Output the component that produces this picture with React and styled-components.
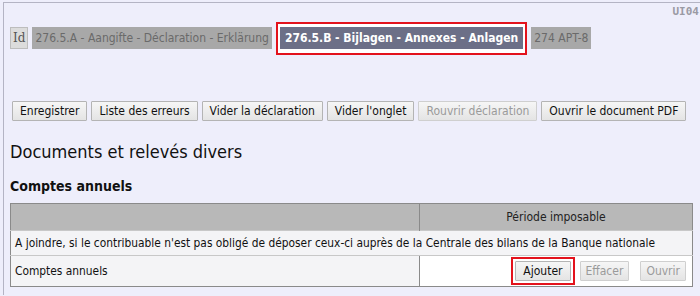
import React from "react";
import styled, { createGlobalStyle } from "styled-components";

const Global = createGlobalStyle`
  html, body { margin: 0; padding: 0; background: #eeeefb; }
  body { font-family: "DejaVu Sans Condensed", "DejaVu Sans", sans-serif; font-size: 12px; color: #111; }
`;

const Frame = styled.div`
  margin: 2px 0 0 3px;
  border-left: 1px solid #b4b4c4;
  border-top: 1px solid #b4b4c4;
  padding: 0 0 10px 6px;
  height: 293px;
  box-sizing: border-box;
  overflow: hidden;
`;

const TopBar = styled.div`
  display: flex;
  justify-content: flex-end;
  height: 14px;
  padding-top: 2px;
`;

const Code = styled.span`
  font-family: "DejaVu Sans Mono", monospace;
  font-weight: bold;
  font-size: 11px;
  line-height: 14px;
  color: #9a9aa4;
  margin-right: 1px;
`;

const TabRow = styled.div`
  display: flex;
  align-items: center;
  gap: 4px;
  margin-top: 2px;
  height: 34px;
`;

const IdBox = styled.div`
  height: 20px;
  line-height: 20px;
  padding: 0 2px;
  background: #dcdcdc;
  border: 1px solid #bdbdbd;
  color: #555;
  font-family: "DejaVu Serif", serif;
  font-size: 12px;
`;

const Tab = styled.div`
  height: 22px;
  line-height: 22px;
  padding: 0 3px;
  background: #a8a8a8;
  color: #6a6a6a;
  white-space: nowrap;
`;

const ActiveWrap = styled.div`
  border: 2px solid #e3121c;
  padding: 3px 2px 4px;
  background: #fff;
`;

const ActiveTab = styled.div`
  height: 22px;
  line-height: 22px;
  padding: 0 5px;
  background: #6c6f87;
  color: #fff;
  font-weight: bold;
  white-space: nowrap;
`;

const Toolbar = styled.div`
  display: flex;
  gap: 4px;
  margin-top: 46px;
  padding-left: 2px;
`;

const Button = styled.button`
  height: 20px;
  padding: 0 ${p => p.$pad ?? 7}px;
  margin-left: ${p => p.$gapBefore || 0}px;
  font-family: inherit;
  font-size: 12px;
  color: ${p => (p.disabled ? "#9a9a9a" : "#111")};
  background: linear-gradient(#f6f6f6, #e4e4e4);
  border: 1px solid ${p => (p.disabled ? "#cfcfcf" : "#b4b4b4")};
  border-radius: 1px;
  white-space: nowrap;
  cursor: default;
`;

const Heading = styled.h1`
  margin: 20px 0 0 0;
  font-size: 18px;
  font-weight: normal;
  color: #111;
  line-height: 22px;
`;

const SubHeading = styled.h2`
  margin: 14px 0 0 0;
  font-size: 14px;
  font-weight: bold;
  line-height: 18px;
`;

const Table = styled.table`
  margin-top: 8px;
  width: 683px;
  border-collapse: collapse;
  border: 1px solid #8a8a8a;
`;

const Th = styled.th`
  background: #b8b8b8;
  height: 26px;
  font-weight: normal;
  color: #222;
  text-align: center;
  border-left: 1px solid #8a8a8a;
  padding: 0;
  &:first-child { border-left: none; }
`;

const Td = styled.td`
  height: ${p => p.$h || 24}px;
  padding: 0 ${p => p.$padR ?? 4}px 0 4px;
  background: ${p => (p.$white ? "#fff" : "#f4f4f6")};
  border-top: 1px solid #c8c8c8;
  border-left: ${p => (p.$sep ? "1px solid #8a8a8a" : "none")};
  white-space: nowrap;
  font-size: 11.85px;
`;

const Actions = styled.div`
  display: flex;
  justify-content: flex-end;
  align-items: center;
  gap: 5px;
`;

const Highlight = styled.div`
  border: 2px solid #e3121c;
  padding: 2px;
  background: #fff;
  display: flex;
`;

export default function App() {
  return (
    <>
      <Global />
      <Frame>
        <TopBar><Code>UI04</Code></TopBar>
        <TabRow>
          <IdBox>Id</IdBox>
          <Tab>276.5.A - Aangifte - Déclaration - Erklärung</Tab>
          <ActiveWrap>
            <ActiveTab>276.5.B - Bijlagen - Annexes - Anlagen</ActiveTab>
          </ActiveWrap>
          <Tab>274 APT-8</Tab>
        </TabRow>
        <Toolbar>
          <Button>Enregistrer</Button>
          <Button>Liste des erreurs</Button>
          <Button>Vider la déclaration</Button>
          <Button>Vider l'onglet</Button>
          <Button disabled>Rouvrir déclaration</Button>
          <Button>Ouvrir le document PDF</Button>
        </Toolbar>
        <Heading>Documents et relevés divers</Heading>
        <SubHeading>Comptes annuels</SubHeading>
        <Table>
          <thead>
            <tr>
              <Th style={{ width: 408 }}></Th>
              <Th>Période imposable</Th>
            </tr>
          </thead>
          <tbody>
            <tr>
              <Td colSpan={2}>A joindre, si le contribuable n'est pas obligé de déposer ceux-ci auprès de la Centrale des bilans de la Banque nationale</Td>
            </tr>
            <tr>
              <Td $h={30}>Comptes annuels</Td>
              <Td $h={30} $white $sep $padR={6}>
                <Actions>
                  <Highlight><Button>Ajouter</Button></Highlight>
                  <Button disabled $pad={5}>Effacer</Button>
                  <Button disabled $pad={5} $gapBefore={6}>Ouvrir</Button>
                </Actions>
              </Td>
            </tr>
          </tbody>
        </Table>
      </Frame>
    </>
  );
}
